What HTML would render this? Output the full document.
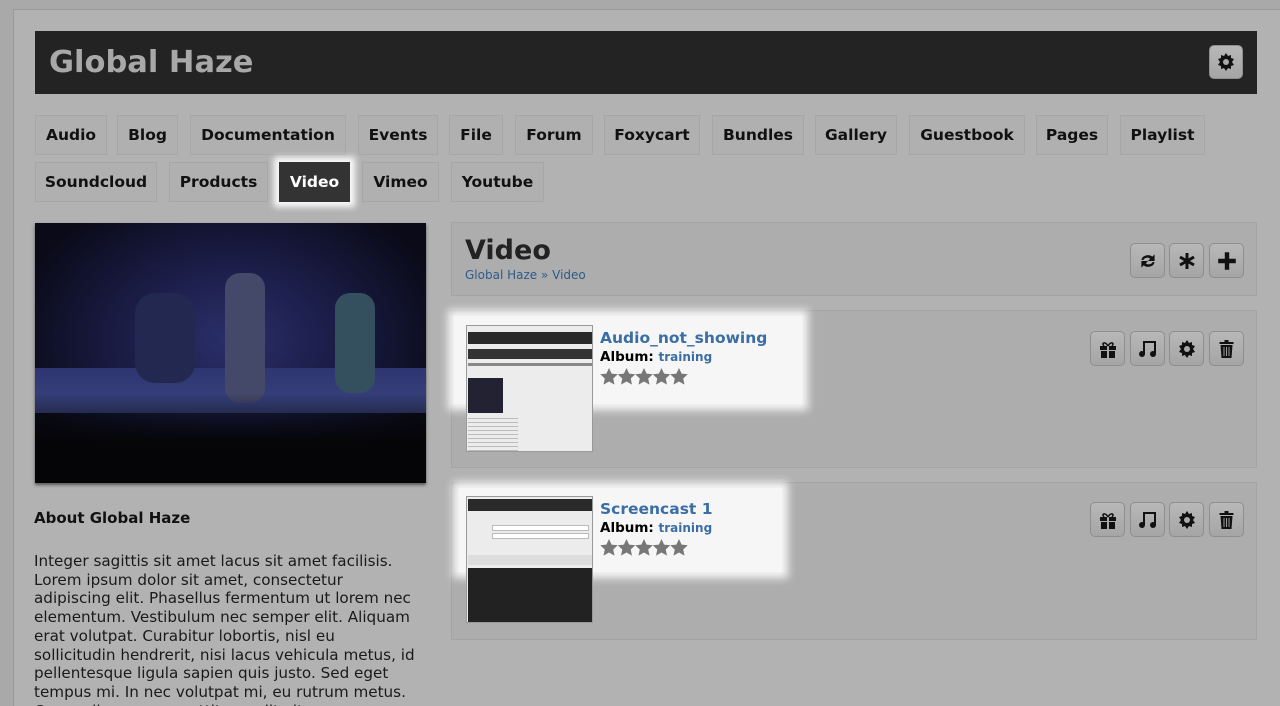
<!DOCTYPE html><html><head><style>
html,body{margin:0;width:1280px;height:706px;overflow:hidden}
body{background:#a9a9a9;font-family:"DejaVu Sans","Liberation Sans",sans-serif;position:relative}
.pg{position:absolute;left:13px;top:9px;width:1290px;height:720px;background:#b2b2b2;border:1px solid #999}
.a{position:absolute}
.hdr{left:35px;top:31px;width:1222px;height:63px;background:#232323}
.hdr span{position:absolute;left:14px;top:14px;font-size:30.5px;font-weight:bold;color:#a8a8a8}
.nb{position:absolute;height:40px;border:1px solid #a6a6a6;background:#b0b0b0;font-weight:bold;font-size:15.5px;line-height:38px;text-align:center;color:#111;box-sizing:border-box}
.btn{position:absolute;width:35px;height:35px;border:1px solid #8e8e8e;border-radius:5px;background:linear-gradient(#b8b8b8,#a5a5a5);box-sizing:border-box;display:flex;align-items:center;justify-content:center}
.box{position:absolute;left:451px;width:806px;background:#adadad;border:1px solid #a4a4a4;box-sizing:border-box}
.hl{position:absolute;background:#f6f6f6;box-shadow:0 0 8px 6px #f6f6f6}
.t{font-size:15.5px;font-weight:bold;color:#3a6ea5}
.al{font-size:13.5px;font-weight:bold;color:#000}
.al b{color:#3a6ea5;font-size:12px}
</style></head><body>
<svg width="0" height="0" style="position:absolute"><defs><path id="st" d="M9 0l2.6 5.6 6.2.7-4.6 4.2 1.3 6.1L9 13.5l-5.5 3.1 1.3-6.1L.2 6.3l6.2-.7z"/>
<g id="gear"><path d="M10 1l2 3 3-1 0 3 3 1-2 3 2 3-3 1 0 3-3-1-2 3-2-3-3 1 0-3-3-1 2-3-2-3 3-1 0-3 3 1z" fill="#111"/><circle cx="10" cy="10" r="3" fill="#aaa"/></g></defs></svg>
<div class="pg"></div>
<div class="a hdr"><span>Global Haze</span></div>
<div class="btn" style="left:1209px;top:45px;width:34px;height:34px"><svg width="20" height="20" viewBox="0 0 20 20"><use href="#gear"/></svg></div>

<div class="nb" style="left:35px;top:115px;width:72px">Audio</div>
<div class="nb" style="left:117px;top:115px;width:61px">Blog</div>
<div class="nb" style="left:190px;top:115px;width:156px">Documentation</div>
<div class="nb" style="left:358px;top:115px;width:80px">Events</div>
<div class="nb" style="left:449px;top:115px;width:54px">File</div>
<div class="nb" style="left:515px;top:115px;width:78px">Forum</div>
<div class="nb" style="left:604px;top:115px;width:96px">Foxycart</div>
<div class="nb" style="left:712px;top:115px;width:92px">Bundles</div>
<div class="nb" style="left:815px;top:115px;width:82px">Gallery</div>
<div class="nb" style="left:909px;top:115px;width:116px">Guestbook</div>
<div class="nb" style="left:1036px;top:115px;width:72px">Pages</div>
<div class="nb" style="left:1120px;top:115px;width:85px">Playlist</div>
<div class="nb" style="left:35px;top:162px;width:122px">Soundcloud</div>
<div class="nb" style="left:169px;top:162px;width:99px">Products</div>
<div class="nb" style="left:279px;top:162px;width:71px;background:#333;border-color:#333;color:#fff;box-shadow:0 0 6px 5px #fafafa">Video</div>
<div class="nb" style="left:362px;top:162px;width:77px">Vimeo</div>
<div class="nb" style="left:451px;top:162px;width:93px">Youtube</div>

<div class="a" style="left:35px;top:223px;width:391px;height:260px;background:radial-gradient(ellipse at 50% 45%,#2a2f6a 0%,#1a1c45 40%,#0a0a18 80%);box-shadow:0 2px 3px #555;overflow:hidden">
<div class="a" style="left:0;top:145px;width:391px;height:45px;background:linear-gradient(#2e3570,#3a4580)"></div>
<div class="a" style="left:190px;top:50px;width:40px;height:130px;background:#44496a;border-radius:15px"></div>
<div class="a" style="left:300px;top:70px;width:40px;height:100px;background:#34505e;border-radius:15px"></div>
<div class="a" style="left:100px;top:70px;width:60px;height:90px;background:#232850;border-radius:20px"></div>
<div class="a" style="left:0;top:170px;width:391px;height:90px;background:linear-gradient(transparent,#050508 55%)"></div>
</div>
<div class="a" style="left:34px;top:509px;font-size:15px;font-weight:bold;color:#111">About Global Haze</div>
<div class="a" style="left:34px;top:552px;width:420px;font-size:15.2px;line-height:18.7px;color:#1a1a1a;white-space:nowrap">Integer sagittis sit amet lacus sit amet facilisis.<br>Lorem ipsum dolor sit amet, consectetur<br>adipiscing elit. Phasellus fermentum ut lorem nec<br>elementum. Vestibulum nec semper elit. Aliquam<br>erat volutpat. Curabitur lobortis, nisl eu<br>sollicitudin hendrerit, nisi lacus vehicula metus, id<br>pellentesque ligula sapien quis justo. Sed eget<br>tempus mi. In nec volutpat mi, eu rutrum metus.<br>Cras nulla massa, porttitor a elit vitae, semper</div>

<div class="box" style="top:222px;height:74px"></div>
<div class="a" style="left:465px;top:235px;font-size:27px;font-weight:bold;color:#222">Video</div>
<div class="a" style="left:465px;top:268px;font-size:12px;color:#2e5a88">Global Haze » <span>Video</span></div>
<div class="btn" style="left:1130px;top:243px"><svg width="22" height="22" viewBox="0 0 20 20"><path d="M4 9a6 5 0 0 1 10-3l2-2v6h-6l2-2a3.5 3 0 0 0-6 1z M16 11a6 5 0 0 1-10 3l-2 2v-6h6l-2 2a3.5 3 0 0 0 6-1z" fill="#111"/></svg></div>
<div class="btn" style="left:1169px;top:243px"><svg width="20" height="20" viewBox="0 0 20 20"><path d="M10 2v16M3 6l14 8M17 6L3 14" stroke="#111" stroke-width="3"/></svg></div>
<div class="btn" style="left:1209px;top:243px"><svg width="22" height="22" viewBox="0 0 20 20"><path d="M10 2v16M2 10h16" stroke="#111" stroke-width="4"/></svg></div>

<div class="box" style="top:310px;height:158px"></div>
<div class="hl" style="left:454px;top:316px;width:348px;height:88px"></div>
<div class="a" style="left:466px;top:325px;width:127px;height:127px;background:#ececec;border:1px solid #999;box-sizing:border-box;overflow:hidden">
<div class="a" style="left:1px;top:6px;width:125px;height:12px;background:#2a2a2a"></div>
<div class="a" style="left:1px;top:23px;width:125px;height:10px;background:#333"></div>
<div class="a" style="left:1px;top:37px;width:125px;height:3px;background:#888"></div>
<div class="a" style="left:1px;top:52px;width:35px;height:35px;background:#223"></div>
<div class="a" style="left:1px;top:92px;width:50px;height:34px;background:repeating-linear-gradient(#bbb 0 1px,transparent 1px 4px)"></div>
</div>
<div class="a t" style="left:600px;top:329px">Audio_not_showing</div>
<div class="a al" style="left:600px;top:349px">Album: <b>training</b></div>
<svg class="a" style="left:600px;top:368px" width="90" height="18" viewBox="0 0 90 18" fill="#777"><use href="#st"/><use href="#st" x="17.5"/><use href="#st" x="35"/><use href="#st" x="52.5"/><use href="#st" x="70"/></svg>

<div class="box" style="top:482px;height:158px"></div>
<div class="hl" style="left:459px;top:488px;width:323px;height:84px"></div>
<div class="a" style="left:466px;top:496px;width:127px;height:127px;background:#ececec;border:1px solid #999;box-sizing:border-box;overflow:hidden">
<div class="a" style="left:1px;top:2px;width:125px;height:12px;background:#2a2a2a"></div>
<div class="a" style="left:25px;top:28px;width:95px;height:4px;border:1px solid #bbb;background:#fff"></div>
<div class="a" style="left:25px;top:36px;width:95px;height:4px;border:1px solid #bbb;background:#fff"></div>
<div class="a" style="left:1px;top:58px;width:125px;height:10px;background:#ddd"></div>
<div class="a" style="left:1px;top:71px;width:125px;height:56px;background:#222"></div>
</div>
<div class="a t" style="left:600px;top:500px">Screencast 1</div>
<div class="a al" style="left:600px;top:520px">Album: <b>training</b></div>
<svg class="a" style="left:600px;top:539px" width="90" height="18" viewBox="0 0 90 18" fill="#777"><use href="#st"/><use href="#st" x="17.5"/><use href="#st" x="35"/><use href="#st" x="52.5"/><use href="#st" x="70"/></svg>

<div class="btn" style="left:1090px;top:331px"><svg width="20" height="20" viewBox="0 0 20 20"><path d="M2 7h16v4H2zM3 12h14v7H3z" fill="#111"/><path d="M9 7v12h2V7" fill="#aaa"/><path d="M10 7c-3-5-7-3-4 0M10 7c3-5 7-3 4 0" stroke="#111" fill="none" stroke-width="1.5"/></svg></div>
<div class="btn" style="left:1130px;top:331px"><svg width="20" height="20" viewBox="0 0 20 20"><path d="M6 15V3h11v12" stroke="#111" stroke-width="2" fill="none"/><circle cx="4" cy="15" r="3" fill="#111"/><circle cx="15" cy="15" r="3" fill="#111"/></svg></div>
<div class="btn" style="left:1169px;top:331px"><svg width="20" height="20" viewBox="0 0 20 20"><use href="#gear"/></svg></div>
<div class="btn" style="left:1209px;top:331px"><svg width="17" height="20" viewBox="0 0 16 20"><path d="M1 3h14v2H1zM6 1h4v2H6zM2 6h12l-1 13H3z" fill="#111"/><path d="M5.5 8v9M8 8v9M10.5 8v9" stroke="#999" stroke-width="1"/></svg></div>

<div class="btn" style="left:1090px;top:502px"><svg width="20" height="20" viewBox="0 0 20 20"><path d="M2 7h16v4H2zM3 12h14v7H3z" fill="#111"/><path d="M9 7v12h2V7" fill="#aaa"/><path d="M10 7c-3-5-7-3-4 0M10 7c3-5 7-3 4 0" stroke="#111" fill="none" stroke-width="1.5"/></svg></div>
<div class="btn" style="left:1130px;top:502px"><svg width="20" height="20" viewBox="0 0 20 20"><path d="M6 15V3h11v12" stroke="#111" stroke-width="2" fill="none"/><circle cx="4" cy="15" r="3" fill="#111"/><circle cx="15" cy="15" r="3" fill="#111"/></svg></div>
<div class="btn" style="left:1169px;top:502px"><svg width="20" height="20" viewBox="0 0 20 20"><use href="#gear"/></svg></div>
<div class="btn" style="left:1209px;top:502px"><svg width="17" height="20" viewBox="0 0 16 20"><path d="M1 3h14v2H1zM6 1h4v2H6zM2 6h12l-1 13H3z" fill="#111"/><path d="M5.5 8v9M8 8v9M10.5 8v9" stroke="#999" stroke-width="1"/></svg></div>
</body></html>
